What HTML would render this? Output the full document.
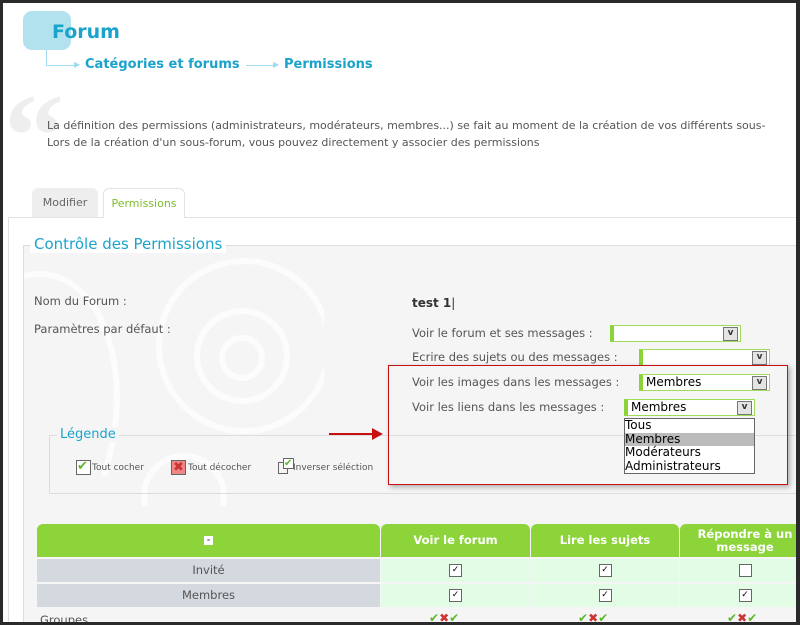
<!DOCTYPE html><html><head><meta charset="utf-8"><style>
html,body{margin:0;width:800px;height:625px;overflow:hidden}
body{background:#fff;font-family:"DejaVu Sans","Liberation Sans",sans-serif;position:relative}
.a{position:absolute}
.frame{position:absolute;left:0;top:0;width:800px;height:625px;box-sizing:border-box;border:3px solid #2a2a2a;border-right-width:4px;pointer-events:none;z-index:20}
.t{font-size:11.5px;color:#555}
.sel{position:absolute;height:17px;border:1px solid #9edc5a;border-left:4px solid #8cd33a;background:#fff;box-sizing:border-box;font-size:12px;color:#000;line-height:15px;padding-left:3px}
.sel i{position:absolute;right:2px;top:1px;width:13px;height:12px;border:1px solid #777;background:#e4e4e4;font-style:normal;font-size:9px;font-weight:bold;text-align:center;line-height:11px;color:#333}
.cb{display:inline-block;width:11px;height:11px;border:1px solid #666;background:#fff;font-size:9px;line-height:11px;text-align:center;vertical-align:middle}
.th{position:absolute;top:524px;height:33px;background:#8cd43a;color:#fff;font-weight:bold;font-size:11.5px;text-align:center;border-radius:6px 6px 0 0;display:flex;align-items:center;justify-content:center;line-height:13px}
.rc{position:absolute;height:23px;background:#e3fce6;text-align:center;line-height:22px}
.rl{position:absolute;left:37px;width:343px;height:23px;background:#d4d8df;color:#555;font-size:11.5px;text-align:center;line-height:23px}
</style></head><body>
<div class="frame"></div>
<div class="a" style="left:23px;top:11px;width:48px;height:39px;background:#b3e2ef;border-radius:9px"></div>
<div class="a" style="left:52px;top:21px;font-size:19px;color:#1ba3cc;font-weight:bold;-webkit-text-stroke:0">Forum</div>
<div class="a" style="left:46px;top:50px;width:1px;height:15px;background:#9fdcef"></div>
<div class="a" style="left:46px;top:65px;width:30px;height:1px;background:#9fdcef"></div>
<div class="a" style="left:74px;top:60px;color:#9fdcef;font-size:8px">▶</div>
<div class="a" style="left:85px;top:57px;font-size:13px;font-weight:bold;color:#1ba3cc">Catégories et forums</div>
<div class="a" style="left:246px;top:65px;width:30px;height:1px;background:#9fdcef"></div>
<div class="a" style="left:273px;top:60px;color:#9fdcef;font-size:8px">▶</div>
<div class="a" style="left:284px;top:57px;font-size:13px;font-weight:bold;color:#1ba3cc">Permissions</div>
<div class="a" style="left:4px;top:76px;font-size:120px;color:#eee;font-family:'Liberation Serif',serif;line-height:120px;font-weight:bold">“</div>
<div class="a t" style="left:47px;top:117px;line-height:17px;white-space:nowrap;font-size:11px">La définition des permissions (administrateurs, modérateurs, membres...) se fait au moment de la création de vos différents sous-<br>Lors de la création d'un sous-forum, vous pouvez directement y associer des permissions</div>
<div class="a" style="left:32px;top:188px;width:66px;height:29px;background:#eee;border-radius:6px 6px 0 0;font-size:11px;color:#666;text-align:center;line-height:29px">Modifier</div>
<div class="a" style="left:103px;top:188px;width:82px;height:30px;background:#fff;border:1px solid #e4e4e4;border-bottom:none;border-radius:6px 6px 0 0;font-size:11px;color:#7dbb2c;text-align:center;line-height:29px;z-index:2;box-sizing:border-box">Permissions</div>
<div class="a" style="left:8px;top:217px;width:800px;height:410px;border:1px solid #e2e2e2;background:#fff"></div>
<div class="a" style="left:23px;top:245px;width:790px;height:385px;border:1px solid #ddd;background:#f5f5f5"></div>
<svg class="a" style="left:24px;top:246px" width="300" height="260"><g fill="none" stroke="#fff" stroke-width="6" opacity=".7"><circle cx="220" cy="100" r="85"/><circle cx="218" cy="110" r="45"/><circle cx="218" cy="112" r="20"/><path d="M0 30 Q40 20 70 60 Q110 130 80 230"/><circle cx="160" cy="250" r="40"/></g></svg>
<div class="a" style="left:30px;top:235px;background:#fff;padding:0 4px;font-size:15px;color:#1ba3cc">Contrôle des Permissions</div>
<div class="a t" style="left:34px;top:294px">Nom du Forum :</div>
<div class="a t" style="left:34px;top:322px">Paramètres par défaut :</div>
<div class="a" style="left:412px;top:296px;font-size:12px;font-weight:bold;color:#333">test 1<span style="font-weight:normal">|</span></div>
<div class="a t" style="left:412px;top:326px">Voir le forum et ses messages :</div>
<div class="a t" style="left:412px;top:350px">Ecrire des sujets ou des messages :</div>
<div class="a t" style="left:412px;top:375px">Voir les images dans les messages :</div>
<div class="a t" style="left:412px;top:400px">Voir les liens dans les messages :</div>
<div class="sel" style="left:610px;top:325px;width:131px"><i>v</i></div>
<div class="sel" style="left:639px;top:349px;width:131px"><i>v</i></div>
<div class="sel" style="left:639px;top:374px;width:131px">Membres<i>v</i></div>
<div class="sel" style="left:624px;top:399px;width:131px">Membres<i>v</i></div>
<div class="a" style="left:624px;top:418px;width:129px;height:54px;border:1px solid #666;background:#fff;font-size:12px;line-height:13.5px;z-index:3">
<div>Tous</div><div style="background:#bbb">Membres</div><div>Modérateurs</div><div>Administrateurs</div></div>
<div class="a" style="left:388px;top:365px;width:398px;height:118px;border:1.5px solid #c81010;box-shadow:2px 2px 5px rgba(0,0,0,.3);z-index:2"></div>
<div class="a" style="left:329px;top:433px;width:45px;height:2px;background:#c81010;z-index:4"></div>
<div class="a" style="left:372px;top:428px;width:0;height:0;border-left:11px solid #c81010;border-top:6px solid transparent;border-bottom:6px solid transparent;z-index:4"></div>
<div class="a" style="left:49px;top:435px;width:760px;height:57px;border:1px solid #ddd"></div>
<div class="a" style="left:57px;top:427px;background:#f5f5f5;padding:0 3px;font-size:13px;color:#1ba3cc">Légende</div>
<div class="a" style="left:76px;top:460px;width:13px;height:13px;border:1px solid #666;background:#fff;color:#5bb82a;font-size:13px;line-height:11px">✔</div>
<div class="a" style="left:92px;top:463px;font-size:9px;color:#555">Tout cocher</div>
<div class="a" style="left:171px;top:460px;width:13px;height:13px;border:1px solid #666;background:#e88;color:#c33;font-size:13px;line-height:13px;text-align:center">✖</div>
<div class="a" style="left:188px;top:463px;font-size:9px;color:#555">Tout décocher</div>
<div class="a" style="left:278px;top:462px;width:8px;height:10px;border:1px solid #666"></div>
<div class="a" style="left:283px;top:458px;width:9px;height:9px;border:1px solid #666;background:#fff;color:#5bb82a;font-size:10px;line-height:9px">✔</div>
<div class="a" style="left:293px;top:463px;font-size:9px;color:#555">Inverser séléction</div>
<div class="th" style="left:37px;width:343px"><span style="display:inline-block;width:7px;height:7px;border:1px solid #fff;background:#fff;color:#555;font-size:8px;line-height:6px">-</span></div>
<div class="th" style="left:381px;width:149px">Voir le forum</div>
<div class="th" style="left:531px;width:148px">Lire les sujets</div>
<div class="th" style="left:680px;width:130px">Répondre à un<br>message</div>
<div class="rl" style="top:559px">Invité</div>
<div class="rl" style="top:584px">Membres</div>
<div class="rc" style="left:381px;width:149px;top:559px"><span class="cb">✓</span></div>
<div class="rc" style="left:531px;width:148px;top:559px"><span class="cb">✓</span></div>
<div class="rc" style="left:680px;width:130px;top:559px"><span class="cb"></span></div>
<div class="rc" style="left:381px;width:149px;top:584px"><span class="cb">✓</span></div>
<div class="rc" style="left:531px;width:148px;top:584px"><span class="cb">✓</span></div>
<div class="rc" style="left:680px;width:130px;top:584px"><span class="cb">✓</span></div>
<div class="a" style="left:40px;top:613px;font-size:11.5px;color:#555">Groupes</div>
<div class="a" style="left:429px;top:611px;font-size:12px;color:#5bb82a">✔<span style="color:#c33">✖</span>✔</div>
<div class="a" style="left:578px;top:611px;font-size:12px;color:#5bb82a">✔<span style="color:#c33">✖</span>✔</div>
<div class="a" style="left:727px;top:611px;font-size:12px;color:#5bb82a">✔<span style="color:#c33">✖</span>✔</div>
</body></html>
